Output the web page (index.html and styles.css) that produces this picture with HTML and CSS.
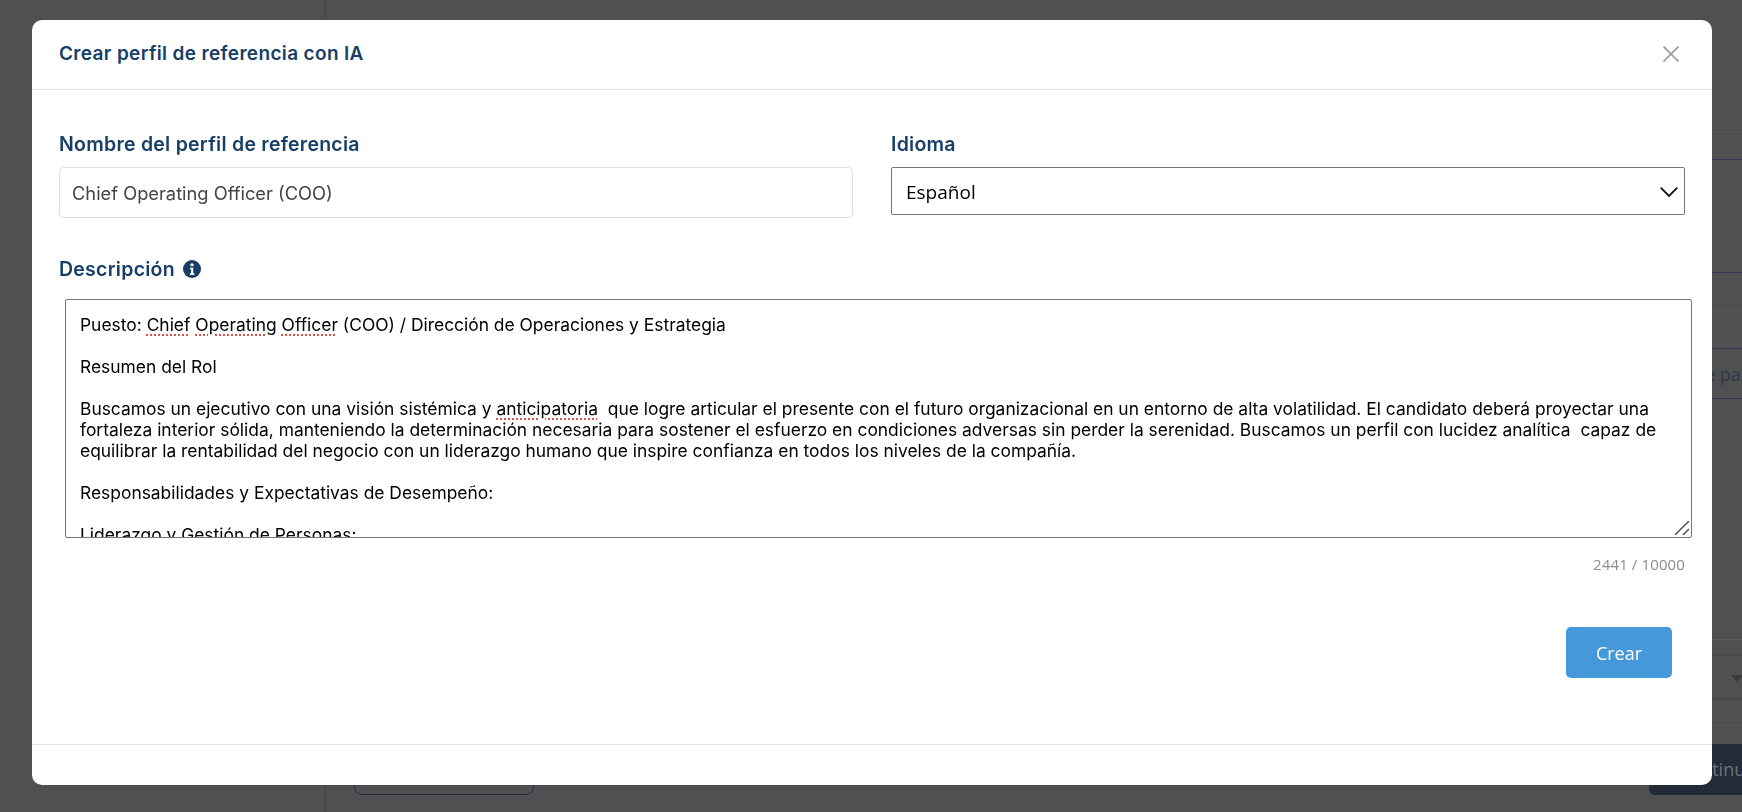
FILE: index.html
```html
<!DOCTYPE html>
<html lang="es">
<head>
<meta charset="utf-8">
<title>Crear perfil de referencia con IA</title>
<link rel="stylesheet" href="styles.css">
</head>
<body>
<div class="page">
  <div class="page-rail"></div>
  <div class="page-rule r1"></div>
  <div class="page-rule r2"></div>
  <div class="page-rule r3"></div>
  <div class="page-rule r4"></div>
  <div class="page-rule r5"></div>
  <div class="page-rule r6"></div>
  <div class="page-rule r7"></div>
  <div class="page-rule r8"></div>
  <div class="page-text">de pasos</div>
  <div class="page-select"></div>
  <div class="page-caret"></div>
  <div class="page-outline"></div>
  <div class="page-primary">Continuar</div>
</div>
<div class="overlay">
  <section class="modal">
    <header class="modal-header">
      <h2 class="modal-title">Crear perfil de referencia con IA</h2>
      <svg class="close" viewBox="0 0 16 16" width="16" height="16" aria-label="Cerrar"><path d="M.5.5l15 15M15.500.5l-15 15"/></svg>
    </header>
    <div class="modal-body">
      <div class="fields">
        <div class="field">
          <label class="label">Nombre del perfil de referencia</label>
          <input class="input" type="text" value="Chief Operating Officer (COO)">
        </div>
        <div class="field">
          <label class="label">Idioma</label>
          <div class="select">
            <span>Español</span>
            <svg class="chevron" viewBox="0 0 18 10" width="18" height="10"><path d="M.7.7L9 9l8.300-8.300"/></svg>
          </div>
        </div>
      </div>
      <div class="desc-label">
        <span class="label">Descripción</span>
        <svg class="info" viewBox="0 0 16 16" width="18" height="18"><circle cx="8" cy="8" r="8"/><circle class="info-mark" cx="8" cy="4.300" r="1.500"/><path class="info-mark" d="M6.200 6.800h2.900v5h1v1.500H6.200v-1.500h1v-3.500h-1z"/></svg>
      </div>
      <div class="textarea">
        <div class="textarea-text">Puesto: <span class="typo">Chief</span> <span class="typo">Operating</span> <span class="typo">Officer</span> (COO) / Dirección de Operaciones y Estrategia

Resumen del Rol

Buscamos un ejecutivo con una visión sistémica y <span class="typo">anticipatoria</span>  que logre articular el presente con el futuro organizacional en un entorno de alta volatilidad. El candidato deberá proyectar una fortaleza interior sólida, manteniendo la determinación necesaria para sostener el esfuerzo en condiciones adversas sin perder la serenidad. Buscamos un perfil con lucidez analítica  capaz de equilibrar la rentabilidad del negocio con un liderazgo humano que inspire confianza en todos los niveles de la compañía.

Responsabilidades y Expectativas de Desempeño:

Liderazgo y Gestión de Personas:</div>
        <svg class="grip" viewBox="0 0 14 14" width="14" height="14"><path d="M0 14L14 0M8 14l6-6"/></svg>
      </div>
      <div class="counter">2441 / 10000</div>
      <div class="actions"><button class="btn" type="button">Crear</button></div>
    </div>
    <footer class="modal-footer"></footer>
  </section>
</div>
</body>
</html>
```
FILE: styles.css
```css
* { box-sizing: border-box; }
html, body { margin: 0; height: 100%; overflow: hidden; }
body { background: #505052; font-family: "Inter", "Liberation Sans", sans-serif; }

/* dimmed page behind the dialog */
.page { position: absolute; inset: 0; overflow: hidden; }
.page-rail { position: absolute; left: 324px; top: 0; bottom: 0; width: 2px; background: #49494b; }
.page-rule { position: absolute; left: 1500px; right: 0; height: 1px; background: #2f3b4c; }
.r1 { top: 131px; background: #59595b; }
.r2 { top: 159px; }
.r3 { top: 272px; }
.r4 { top: 310px; background: #59595b; }
.r5 { top: 348px; }
.r6 { top: 398px; }
.r7 { top: 639px; background: #59595b; }
.r8 { top: 725px; background: #59595b; }
.page-text { position: absolute; left: 1694px; top: 362px; font: 500 18px "Open Sans", sans-serif; color: #2b3747; white-space: nowrap; }
.page-select { position: absolute; left: 1500px; right: 0; top: 654px; height: 46px; border-top: 2px solid #48484a; border-bottom: 2px solid #48484a; }
.page-caret { position: absolute; left: 1731px; top: 675px; border: 6px solid transparent; border-top: 7px solid #3a3a3c; border-bottom: 0; }
.page-outline { position: absolute; left: 354px; top: 740px; width: 180px; height: 55px; border: 1px solid #232b38; border-radius: 8px; }
.page-primary { position: absolute; left: 1649px; top: 744px; right: -40px; height: 51px; background: #232b38; border-radius: 6px; color: #6e7278; font: 18px/51px "Open Sans", sans-serif; padding-left: 30px; }

/* dialog */
.overlay { position: fixed; inset: 0; padding: 20px 30px 27px 32px; }
.modal { height: 765px; background: #fff; border-radius: 10px; display: flex; flex-direction: column; }
.modal-header { height: 70px; flex: none; border-bottom: 1px solid #e6e6e6; display: flex; align-items: center; justify-content: space-between; padding: 0 33px 2px 27px; }
.modal-title { margin: 0; font-size: 19px; letter-spacing: .35px; font-weight: 600; color: #173f67; }
.close { fill: none; stroke: #a0a0a0; stroke-width: 1.800; margin-top: 1px; }
.modal-body { flex: 1; padding: 43px 27px 0 27px; }
.fields { display: grid; grid-template-columns: 794px 794px; column-gap: 38px; }
.field { display: flex; flex-direction: column; gap: 12px; }
.label { font-size: 19.500px; letter-spacing: .25px; font-weight: 600; line-height: 22px; color: #173f67; }
.input { height: 51px; width: 100%; border: 1px solid #dcdcdc; border-radius: 5px; padding: 0 12px; font: 18.300px "Inter", sans-serif; color: #444; background: #fff; outline: 0; }
.select { height: 48px; border: 1px solid #767676; border-radius: 2px; display: flex; align-items: center; justify-content: space-between; padding: 1px 6px 0 14px; font: 19px "Open Sans", sans-serif; color: #000; }
.chevron { fill: none; stroke: #111; stroke-width: 1.800; }
.desc-label { display: flex; align-items: center; gap: 8px; margin-top: 40px; height: 22px; }
.info { fill: #173f67; }
.info-mark { fill: #fff; }
.textarea { position: relative; margin: 19px 0 0 6px; height: 239px; width: 1627px; border: 1px solid #767676; border-radius: 2px; overflow: hidden; padding: 14px 14px; }
.textarea-text { white-space: pre-wrap; font: 17.410px/21px "Inter", sans-serif; color: #000; }
.typo { text-decoration: underline dotted #e0534a 2px; text-underline-offset: 3px; }
.grip { position: absolute; right: 2px; bottom: 2px; fill: none; stroke: #444; stroke-width: 1.400; }
.counter { text-align: right; margin-top: 16px; font: 15px/20px "Open Sans", sans-serif; letter-spacing: .12px; color: #8c8c8c; }
.actions { display: flex; justify-content: flex-end; padding-right: 13px; margin-top: 53px; }
.btn { width: 106px; height: 51px; background: #4598d9; border: 0; border-radius: 5px; color: #fff; font: 18px "Open Sans", sans-serif; }
.modal-footer { height: 41px; flex: none; border-top: 1px solid #e6e6e6; }
```
